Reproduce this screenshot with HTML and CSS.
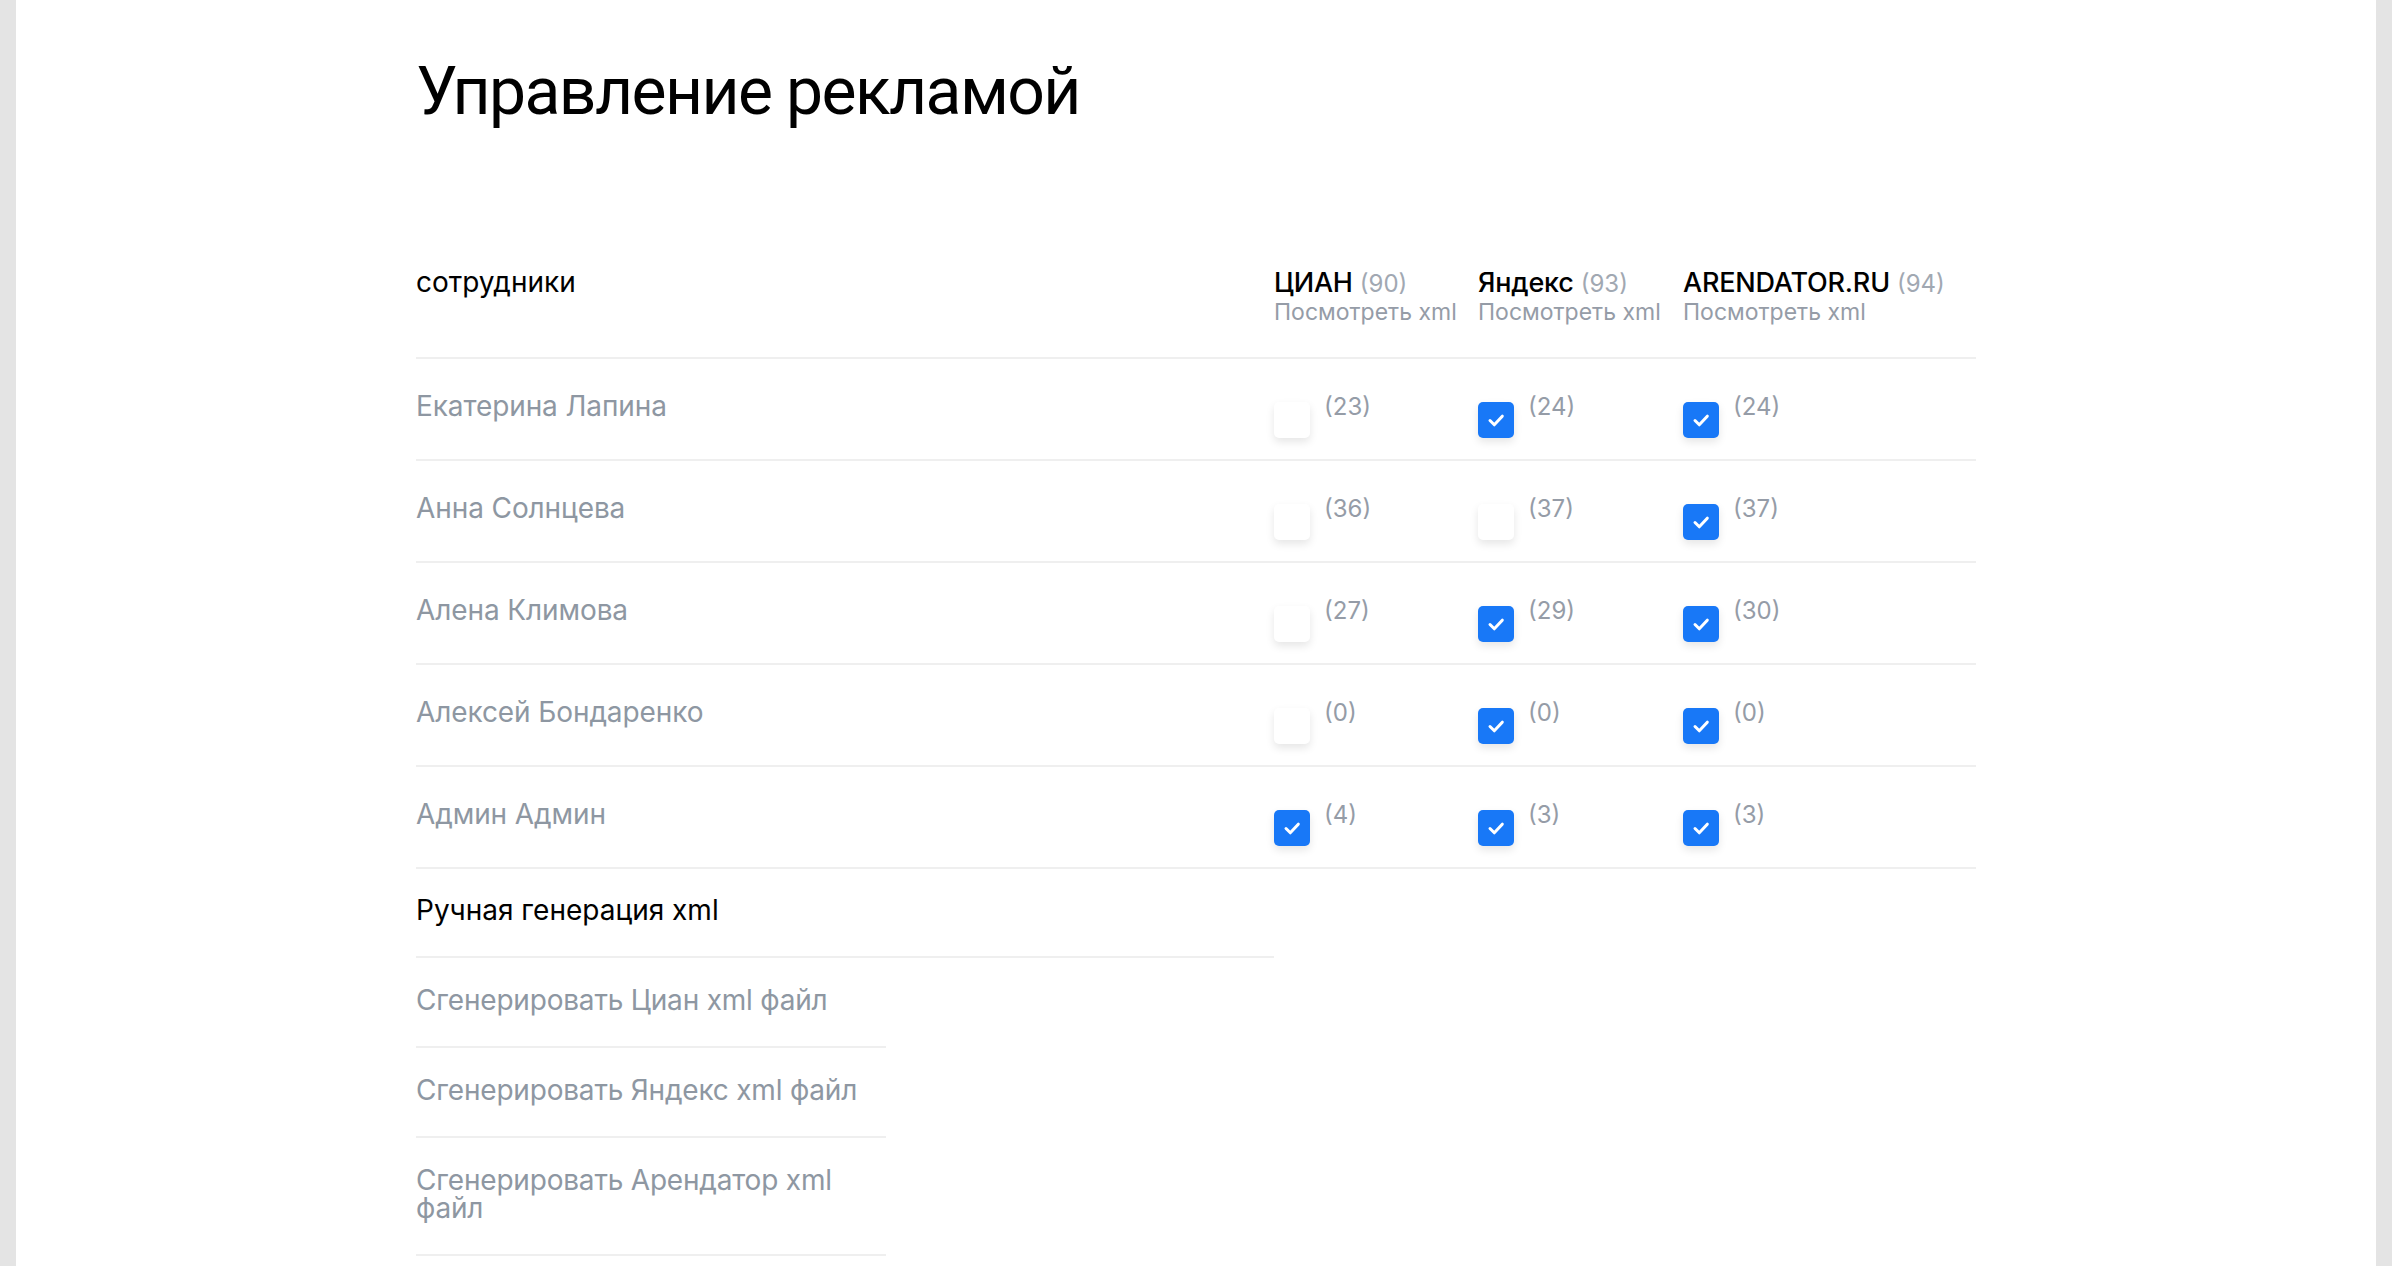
FILE: index.html
```html
<!DOCTYPE html>
<html lang="ru">
<head>
<meta charset="utf-8">
<title>Управление рекламой</title>
<link rel="stylesheet" href="styles.css">
</head>
<body>
<div class="page">
  <div class="content">
    <h1 class="title">Управление рекламой</h1>

    <div class="grid head">
      <div class="col-name">сотрудники</div>
      <div class="platform">
        <div class="p-title">ЦИАН <span class="muted">(90)</span></div>
        <div class="p-link">Посмотреть xml</div>
      </div>
      <div class="platform">
        <div class="p-title">Яндекс <span class="muted">(93)</span></div>
        <div class="p-link">Посмотреть xml</div>
      </div>
      <div class="platform">
        <div class="p-title">ARENDATOR.RU <span class="muted">(94)</span></div>
        <div class="p-link">Посмотреть xml</div>
      </div>
    </div>

    <div class="grid row">
      <div class="name">Екатерина Лапина</div>
      <div class="cell"><span class="cb"></span><span class="count">(23)</span></div>
      <div class="cell"><span class="cb on"><svg viewBox="0 0 36 36"><path d="M12 18.5l4.3 4.3 8-8.6"/></svg></span><span class="count">(24)</span></div>
      <div class="cell"><span class="cb on"><svg viewBox="0 0 36 36"><path d="M12 18.5l4.3 4.3 8-8.6"/></svg></span><span class="count">(24)</span></div>
    </div>
    <div class="grid row">
      <div class="name">Анна Солнцева</div>
      <div class="cell"><span class="cb"></span><span class="count">(36)</span></div>
      <div class="cell"><span class="cb"></span><span class="count">(37)</span></div>
      <div class="cell"><span class="cb on"><svg viewBox="0 0 36 36"><path d="M12 18.5l4.3 4.3 8-8.6"/></svg></span><span class="count">(37)</span></div>
    </div>
    <div class="grid row">
      <div class="name">Алена Климова</div>
      <div class="cell"><span class="cb"></span><span class="count">(27)</span></div>
      <div class="cell"><span class="cb on"><svg viewBox="0 0 36 36"><path d="M12 18.5l4.3 4.3 8-8.6"/></svg></span><span class="count">(29)</span></div>
      <div class="cell"><span class="cb on"><svg viewBox="0 0 36 36"><path d="M12 18.5l4.3 4.3 8-8.6"/></svg></span><span class="count">(30)</span></div>
    </div>
    <div class="grid row">
      <div class="name">Алексей Бондаренко</div>
      <div class="cell"><span class="cb"></span><span class="count">(0)</span></div>
      <div class="cell"><span class="cb on"><svg viewBox="0 0 36 36"><path d="M12 18.5l4.3 4.3 8-8.6"/></svg></span><span class="count">(0)</span></div>
      <div class="cell"><span class="cb on"><svg viewBox="0 0 36 36"><path d="M12 18.5l4.3 4.3 8-8.6"/></svg></span><span class="count">(0)</span></div>
    </div>
    <div class="grid row">
      <div class="name">Админ Админ</div>
      <div class="cell"><span class="cb on"><svg viewBox="0 0 36 36"><path d="M12 18.5l4.3 4.3 8-8.6"/></svg></span><span class="count">(4)</span></div>
      <div class="cell"><span class="cb on"><svg viewBox="0 0 36 36"><path d="M12 18.5l4.3 4.3 8-8.6"/></svg></span><span class="count">(3)</span></div>
      <div class="cell"><span class="cb on"><svg viewBox="0 0 36 36"><path d="M12 18.5l4.3 4.3 8-8.6"/></svg></span><span class="count">(3)</span></div>
    </div>

    <div class="section-title">Ручная генерация xml</div>
    <ul class="gen-list">
      <li>Сгенерировать Циан xml файл</li>
      <li>Сгенерировать Яндекс xml файл</li>
      <li>Сгенерировать Арендатор xml файл</li>
    </ul>
  </div>
</div>
</body>
</html>
```
FILE: styles.css
```css
* { box-sizing: border-box; }

html, body {
  margin: 0;
  padding: 0;
}

body {
  background: #e4e4e4;
  font-family: Inter, "Noto Sans", sans-serif;
  color: #000;
}

.page {
  margin: 0 16px;
  background: #fff;
  min-height: 1266px;
  overflow: hidden;
}

.content {
  width: 1560px;
  margin: 0 auto;
}

.title {
  margin: 58px 0 0;
  font-family: Roboto, Inter, sans-serif;
  font-size: 66px;
  font-weight: 400;
  line-height: 68px;
  letter-spacing: -1.6px;
}

.grid {
  display: grid;
  grid-template-columns: 858px 204px 205px 1fr;
  border-bottom: 2px solid #efefef;
}

.head {
  margin-top: 135px;
  padding-bottom: 33px;
}

.col-name {
  font-size: 28px;
  line-height: 40px;
  font-weight: 400;
  margin-top: 1px;
}

.p-title {
  font-size: 27px;
  line-height: 36px;
  margin-top: 4px;
  font-weight: 500;
  letter-spacing: -0.2px;
  white-space: nowrap;
}

.muted {
  color: #a1a8b2;
  font-weight: 400;
  font-size: 24px;
  letter-spacing: 0;
}

.p-link {
  margin-top: -2px;
  font-size: 23px;
  line-height: 24px;
  color: #959ca7;
  white-space: nowrap;
}

.row {
  height: 102px;
}

.name {
  padding-top: 30px;
  font-size: 28px;
  line-height: 34px;
  color: #8e97a2;
  letter-spacing: -0.1px;
}

.cell {
  display: flex;
  align-items: flex-start;
  gap: 14px;
}

.cb {
  margin-top: 43px;
  width: 36px;
  height: 36px;
  border-radius: 5px;
  background: #fff;
  box-shadow: 0 4px 8px rgba(0, 0, 0, 0.10);
  flex: none;
  display: flex;
}

.cb.on {
  background: #1878f7;
}

.cb svg {
  width: 36px;
  height: 36px;
  fill: none;
  stroke: #fff;
  stroke-width: 3;
  stroke-linecap: round;
  stroke-linejoin: round;
}

.count {
  margin-top: 31px;
  font-size: 24px;
  line-height: 34px;
  color: #959ca7;
}

.section-title {
  width: 858px;
  padding: 24px 0 29px;
  font-size: 28px;
  line-height: 34px;
  border-bottom: 2px solid #efefef;
}

.gen-list {
  list-style: none;
  margin: 0;
  padding: 0;
  width: 470px;
}

.gen-list li {
  padding: 28px 0 32px;
  font-size: 28px;
  line-height: 28px;
  color: #8e97a2;
  letter-spacing: -0.2px;
  border-bottom: 2px solid #efefef;
}
```
